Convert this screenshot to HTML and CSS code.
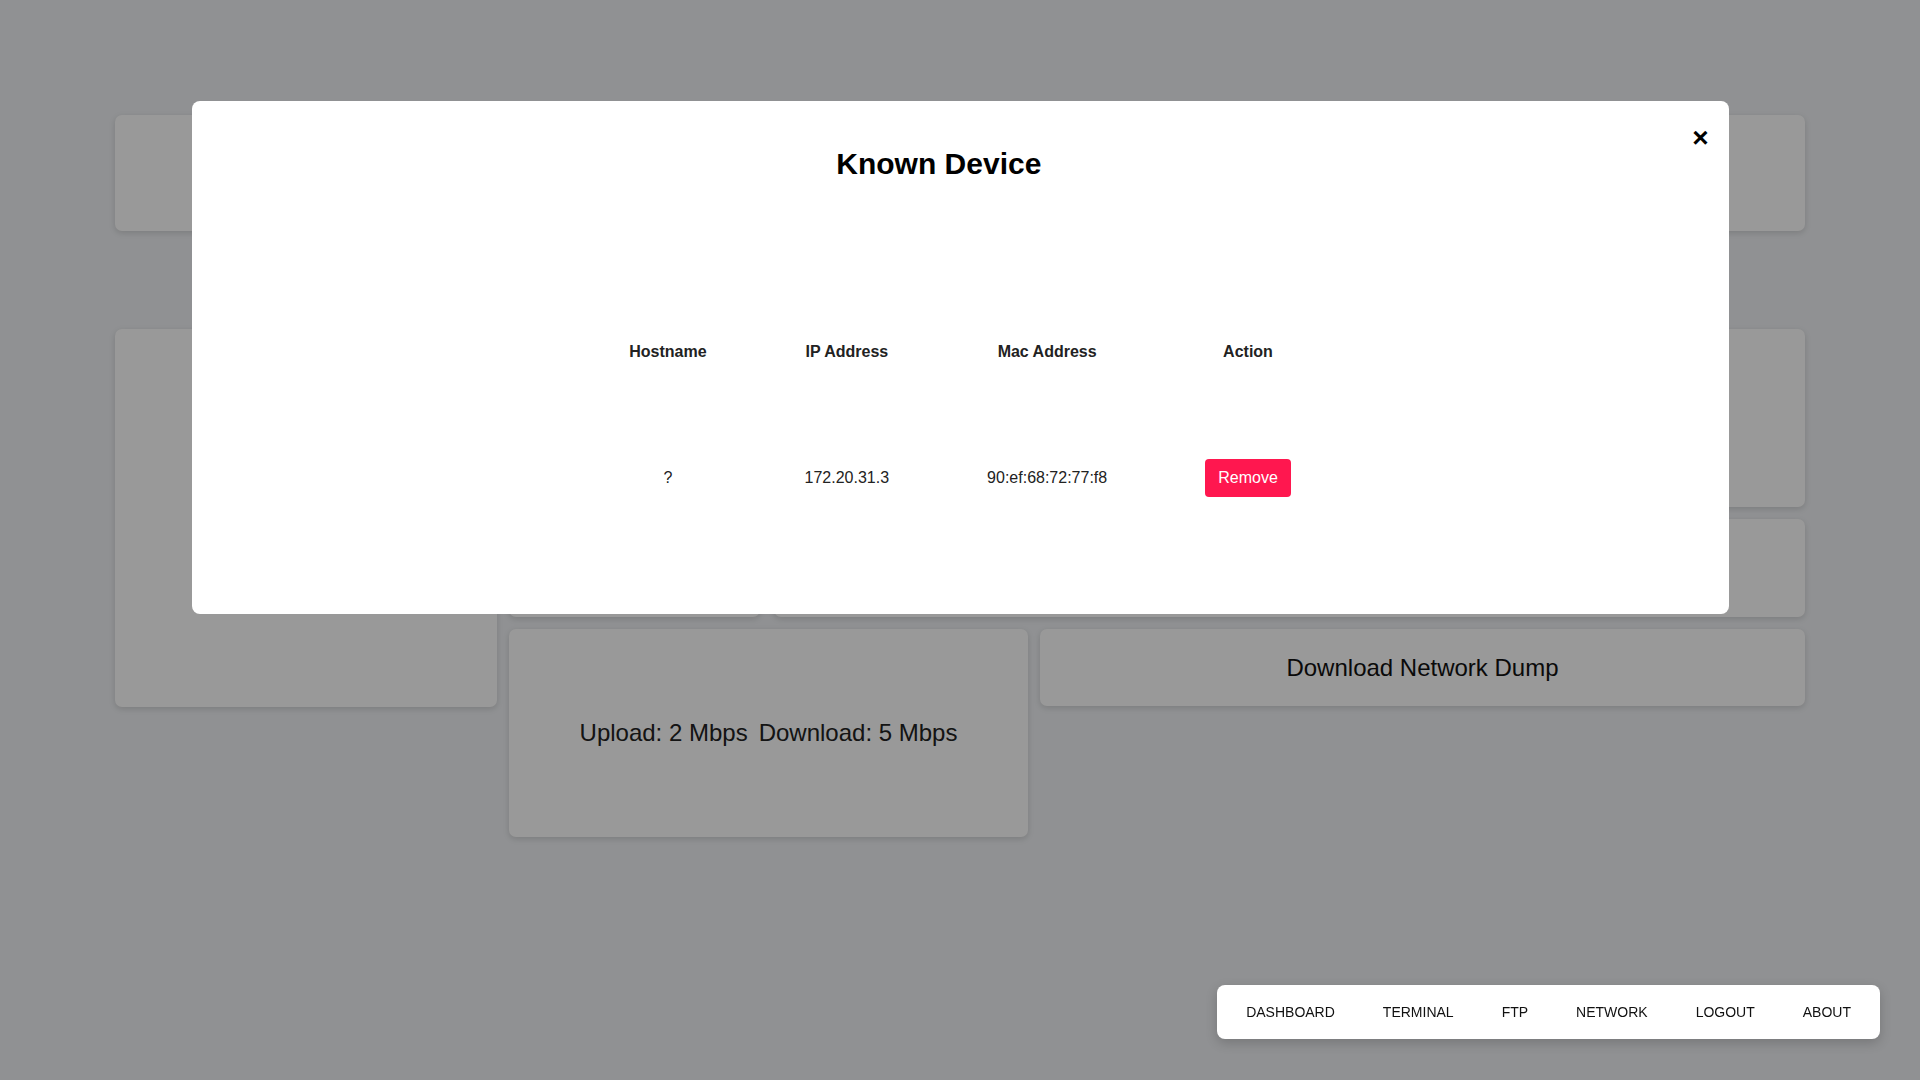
FILE: index.html
```html
<!DOCTYPE html>
<html lang="en">
<head>
<meta charset="utf-8">
<title>Network</title>
<link rel="stylesheet" href="styles.css">
</head>
<body>
<div class="dashboard">
  <div class="card card-top"></div>
  <div class="main-row">
    <div class="card card-left"></div>
    <div class="right-area">
      <div class="card card-r1"></div>
      <div class="row row2">
        <div class="card card-r2a"></div>
        <div class="card card-r2b"></div>
      </div>
      <div class="row row3">
        <div class="card card-speed">
          <span>Upload: 2 Mbps</span>
          <span>Download: 5 Mbps</span>
        </div>
        <div class="card card-dump">Download Network Dump</div>
      </div>
    </div>
  </div>
</div>

<div class="overlay">
  <div class="modal">
    <span class="close">&times;</span>
    <h2 class="modal-title">Known Device</h2>
    <table class="devices">
      <thead>
        <tr>
          <th>Hostname</th>
          <th>IP Address</th>
          <th>Mac Address</th>
          <th>Action</th>
        </tr>
      </thead>
      <tbody>
        <tr>
          <td>?</td>
          <td>172.20.31.3</td>
          <td>90:ef:68:72:77:f8</td>
          <td><button class="btn-remove">Remove</button></td>
        </tr>
      </tbody>
    </table>
  </div>
</div>

<nav class="navbar">
  <a class="nav-item">DASHBOARD</a>
  <a class="nav-item">TERMINAL</a>
  <a class="nav-item">FTP</a>
  <a class="nav-item">NETWORK</a>
  <a class="nav-item">LOGOUT</a>
  <a class="nav-item">ABOUT</a>
</nav>
</body>
</html>
```
FILE: styles.css
```css
* { box-sizing: border-box; }

html, body {
  margin: 0;
  padding: 0;
}

body {
  background: #f0f2f5;
  font-family: "Liberation Sans", Arial, sans-serif;
  color: #222;
  width: 1920px;
  height: 1080px;
  overflow: hidden;
}

.dashboard {
  padding: 115px 115px 0;
}

.card {
  background: #ffffff;
  border-radius: 7px;
  box-shadow: 0 2px 6px rgba(0, 0, 0, 0.14);
}

.card-top {
  height: 116px;
}

.main-row {
  display: flex;
  gap: 12px;
  align-items: flex-start;
  margin-top: 98px;
}

.card-left {
  width: 382px;
  height: 378px;
  flex: none;
}

.right-area {
  flex: 1;
  display: flex;
  flex-direction: column;
  gap: 12px;
}

.card-r1 {
  height: 178px;
}

.row {
  display: flex;
  align-items: flex-start;
}

.row2 {
  gap: 14px;
}

.card-r2a {
  width: 251px;
  height: 98px;
  flex: none;
}

.card-r2b {
  flex: 1;
  height: 98px;
}

.row3 {
  gap: 12px;
}

.card-speed {
  width: 519px;
  height: 208px;
  flex: none;
  display: flex;
  align-items: center;
  justify-content: center;
  gap: 11px;
  font-size: 24px;
  color: #222;
}

.card-dump {
  flex: 1;
  height: 77px;
  display: flex;
  align-items: center;
  justify-content: center;
  font-size: 24px;
  color: #111;
}

.overlay {
  position: fixed;
  inset: 0;
  background: rgba(0, 0, 0, 0.4);
  padding-top: 101px;
  z-index: 10;
}

.modal {
  width: 1537px;
  margin: 0 auto;
  background: #ffffff;
  border-radius: 8px;
  padding: 20px;
}

.close {
  float: right;
  font-size: 28px;
  font-weight: bold;
  color: #000;
  margin-left: 26px;
  margin-top: 1px;
  cursor: pointer;
}

.modal-title {
  margin: 26px 0 0;
  font-size: 30px;
  font-weight: bold;
  color: #000;
  text-align: center;
}

.devices {
  margin: 112px auto 47px;
  border-spacing: 2px;
  font-size: 16px;
  color: #222;
}

.devices th,
.devices td {
  padding: 48px;
  text-align: center;
  vertical-align: middle;
}

.devices th {
  font-weight: bold;
}

.btn-remove {
  display: inline-block;
  background: #ff174f;
  color: #ffffff;
  border: none;
  border-radius: 4px;
  padding: 10px 13px;
  font-family: "Liberation Sans", Arial, sans-serif;
  font-size: 16px;
  line-height: normal;
}

.navbar {
  position: fixed;
  right: 40px;
  bottom: 41px;
  z-index: 20;
  display: flex;
  padding: 5px;
  background: #ffffff;
  border-radius: 8px;
  box-shadow: 0 4px 12px rgba(0, 0, 0, 0.18);
}

.nav-item {
  padding: 13px 24px;
  line-height: 18px;
  font-size: 14px;
  color: #111;
  text-decoration: none;
}
```
